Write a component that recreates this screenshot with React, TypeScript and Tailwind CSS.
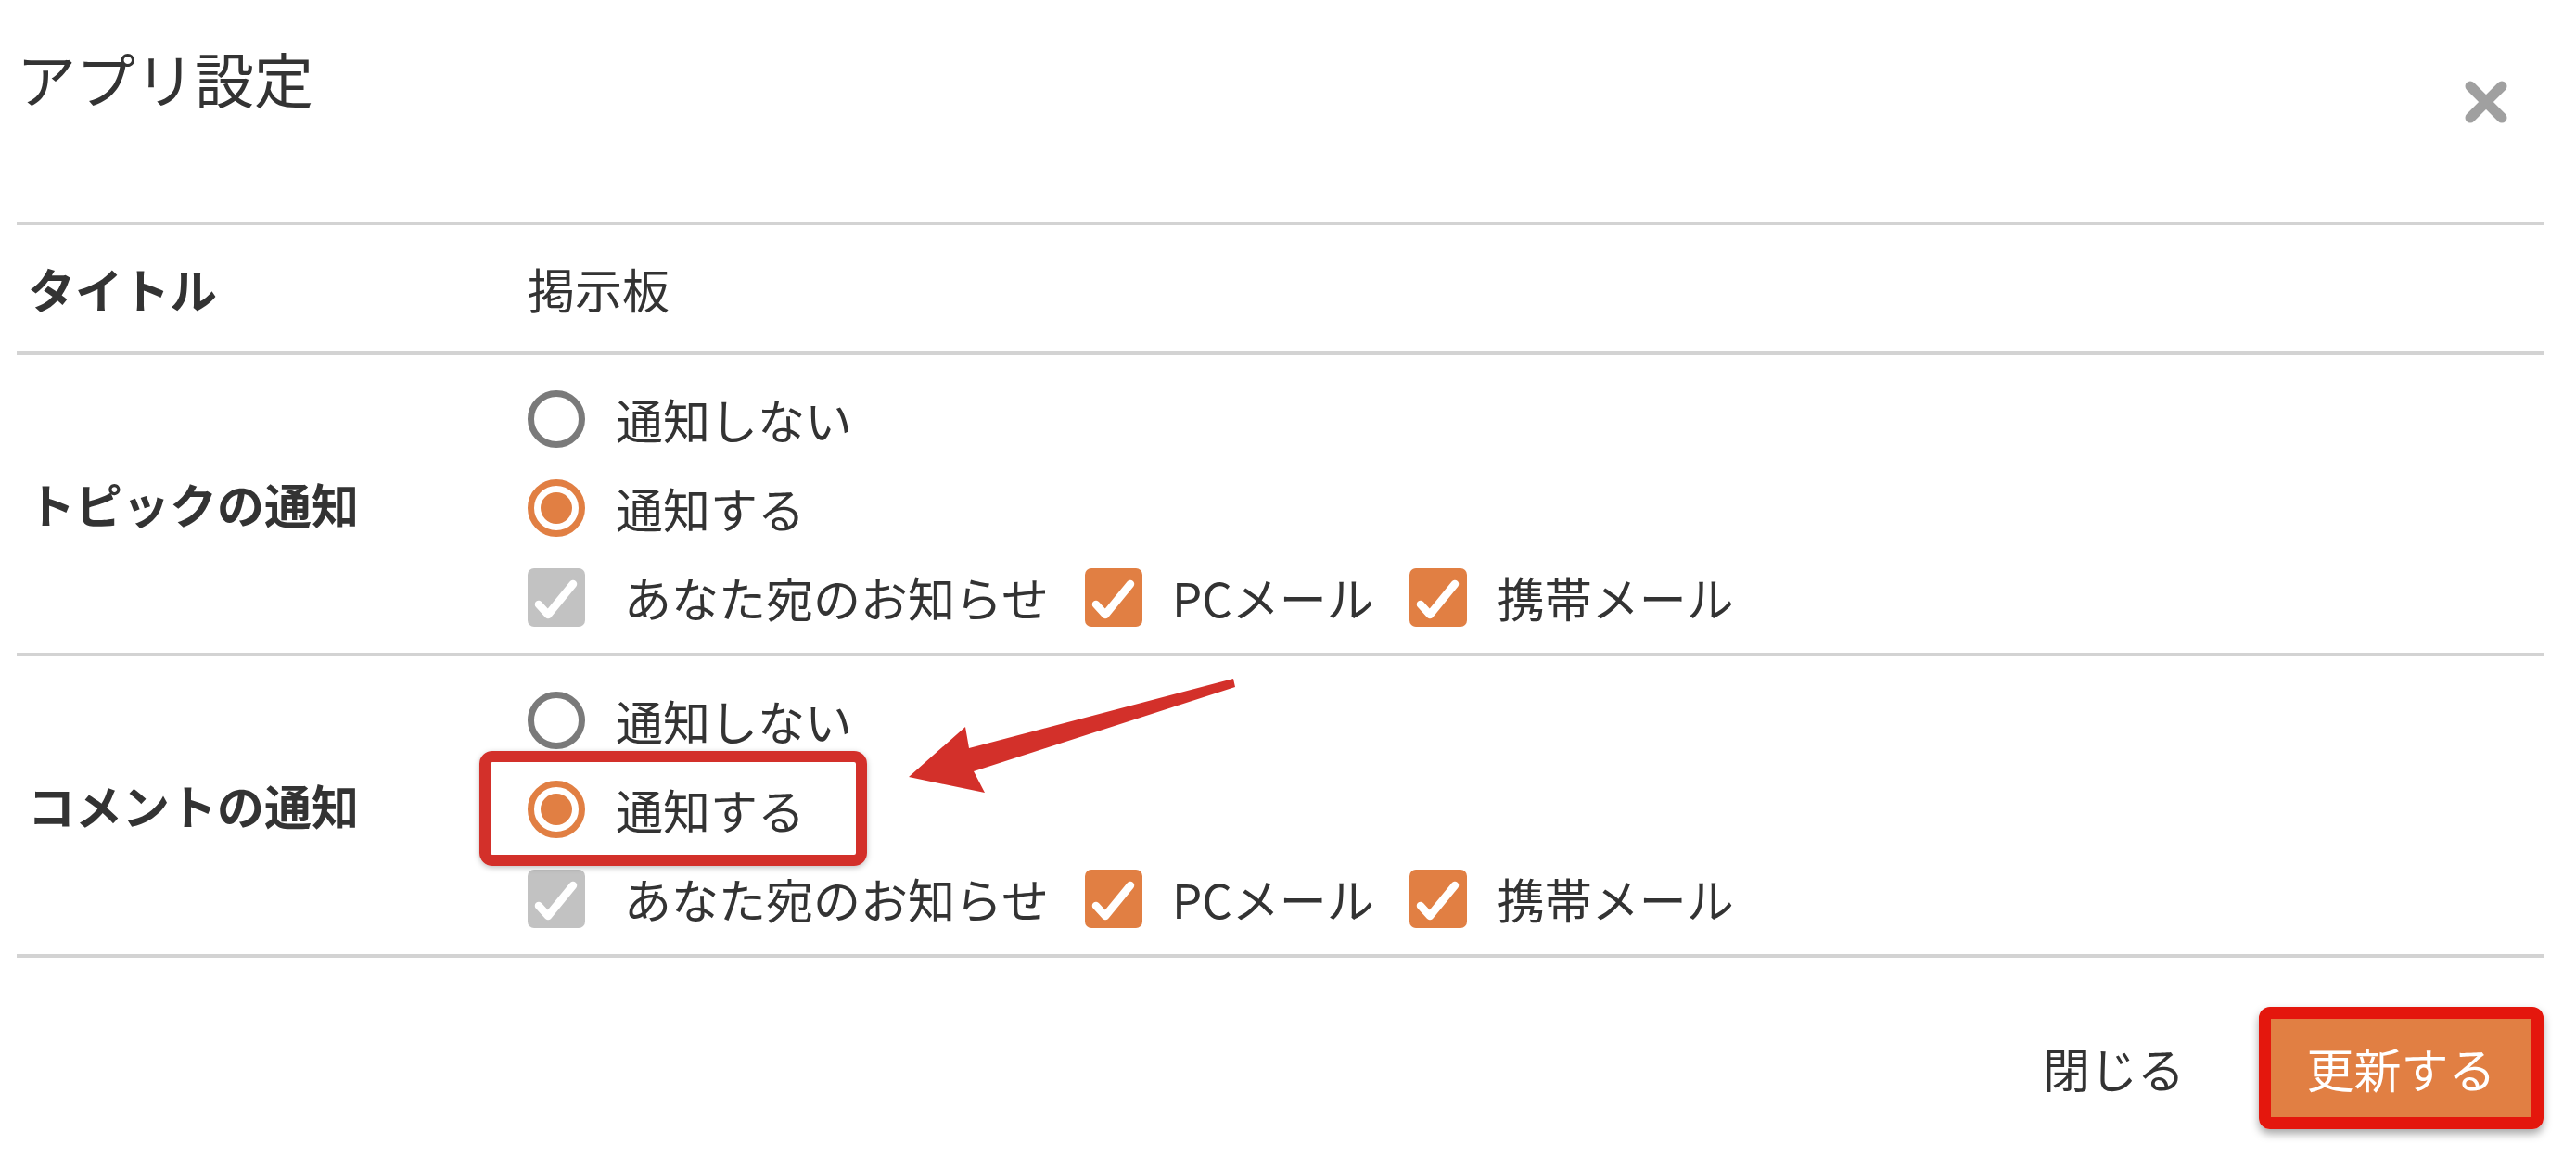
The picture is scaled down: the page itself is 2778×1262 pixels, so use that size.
import React from "react";

function Radio({ checked, label }: { checked?: boolean; label: string }) {
  return (
    <div className="flex h-[96px] items-center">
      {checked ? (
        <span className="flex h-[62px] w-[62px] items-center justify-center rounded-full border-[7px] border-[#e17f43]">
          <span className="h-[34px] w-[34px] rounded-full bg-[#e17f43]" />
        </span>
      ) : (
        <span className="h-[62px] w-[62px] rounded-full border-[7px] border-[#7a7a7a]" />
      )}
      <span className="ml-[33px] text-[51px] leading-none text-[#333333]">{label}</span>
    </div>
  );
}

function Check({ gray }: { gray?: boolean }) {
  return (
    <span
      className={
        gray
          ? "flex h-[63px] w-[62px] shrink-0 items-center justify-center rounded-[7px] bg-[#c2c2c2]"
          : "flex h-[63px] w-[62px] shrink-0 items-center justify-center rounded-[7px] bg-[#e17f43]"
      }
    >
      <svg width="62" height="63" viewBox="0 0 62 63">
        <path
          d="M12 39 L22 50 L49 17"
          fill="none"
          stroke="#ffffff"
          strokeWidth="8.5"
          strokeLinecap="round"
          strokeLinejoin="round"
        />
      </svg>
    </span>
  );
}

function CheckRow() {
  return (
    <div className="flex h-[96px] items-center text-[51px] leading-none text-[#333333]">
      <Check gray />
      <span className="ml-[42px]">あなた宛のお知らせ</span>
      <span className="ml-[39px]">
        <Check />
      </span>
      <span className="ml-[32px]">PCメール</span>
      <span className="ml-[38px]">
        <Check />
      </span>
      <span className="ml-[33px]">携帯メール</span>
    </div>
  );
}

function NotifyRow({ label }: { label: string }) {
  return (
    <div className="flex border-b-[4px] border-[#d3d3d3]">
      <div className="flex w-[551px] shrink-0 items-center pl-[12px] text-[51px] font-bold leading-none text-[#333333]">
        {label}
      </div>
      <div className="flex flex-col pt-[21px] pb-[12px]">
        <Radio label="通知しない" />
        <Radio checked label="通知する" />
        <CheckRow />
      </div>
    </div>
  );
}

export default function App() {
  return (
    <div className="relative h-[1262px] w-[2778px] overflow-hidden bg-white font-['Noto_Sans_CJK_JP','Noto_Sans',sans-serif] text-[#333333]">
      <div className="pl-[18px] pr-[35px]">
        {/* header */}
        <div className="flex h-[243px] items-start justify-between border-b-[4px] border-[#d3d3d3]">
          <div className="flex h-[166px] items-center text-[64px] leading-none text-[#333333]">アプリ設定</div>
          <div className="mr-[38px] flex h-[219px] items-center">
            <svg width="48" height="48" viewBox="0 0 48 48">
              <path d="M7 7 L41 41 M41 7 L7 41" stroke="#a0a0a0" strokeWidth="11" strokeLinecap="round" />
            </svg>
          </div>
        </div>

        {/* title row */}
        <div className="flex h-[140px] border-b-[4px] border-[#d3d3d3]">
          <div className="flex w-[551px] shrink-0 items-center pl-[12px] text-[51px] font-bold leading-none">タイトル</div>
          <div className="flex items-center text-[51px] leading-none">掲示板</div>
        </div>

        <NotifyRow label="トピックの通知" />
        <NotifyRow label="コメントの通知" />

        {/* footer */}
        <div className="flex items-start justify-end pt-[53px]">
          <div className="mr-[80px] flex h-[132px] items-center text-[51px] leading-none text-[#333333]">閉じる</div>
          <div className="rounded-[12px] border-[13px] border-[#e4170d] shadow-[0_5px_10px_rgba(0,0,0,0.35)]">
            <div className="flex h-[106px] w-[281px] items-center justify-center bg-[#e17f43] text-[51px] leading-none text-white">
              更新する
            </div>
          </div>
        </div>
      </div>

      {/* annotations */}
      <div className="pointer-events-none absolute left-[517px] top-[810px] h-[124px] w-[418px] rounded-[14px] border-[12px] border-[#d3302a] shadow-[0_2px_6px_rgba(0,0,0,0.25)]" />
      <svg
        className="pointer-events-none absolute left-0 top-0"
        width="2778"
        height="1262"
        viewBox="0 0 2778 1262"
      >
        <polygon
          points="980,838 1062,855 1050,832 1332,741 1330,732 1045,807 1041,784"
          fill="#d3302a"
        />
      </svg>
    </div>
  );
}
